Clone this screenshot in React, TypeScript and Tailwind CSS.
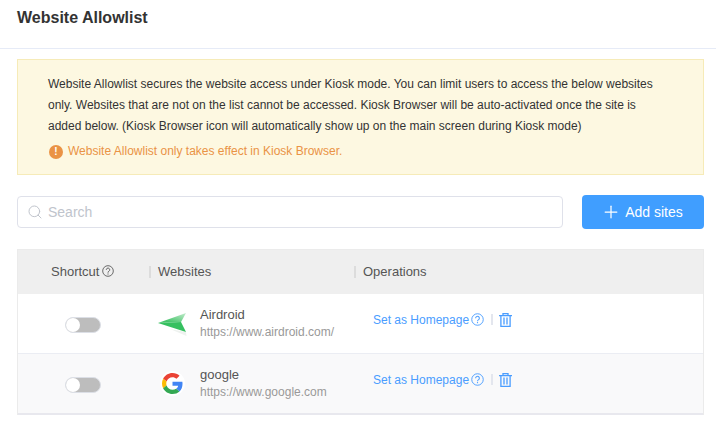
import React from "react";
import { Plus, Search } from "lucide-react";

function HelpIcon({ className }: { className?: string }) {
  return (
    <svg viewBox="0 0 14 14" fill="none" stroke="currentColor" className={className}>
      <circle cx="7" cy="7" r="6.2" strokeWidth="1" />
      <path d="M5 5.6a2 2 0 1 1 3.2 1.6c-.8.5-1.200.8-1.200 1.700" strokeWidth="1.100" />
      <path d="M7 9.800v1.200" strokeWidth="1.200" />
    </svg>
  );
}

function TrashIcon() {
  return (
    <svg viewBox="0 0 13 14" fill="none" stroke="#4a9dff" strokeWidth="1.300" className="w-[13px] h-[14px]">
      <path d="M0 2.600h13M4 2.600V.6h5v2M1.900 2.600v10.800h9.200V2.600M5 4.500v7M8 4.500v7" />
    </svg>
  );
}

function AirdroidLogo() {
  return (
    <svg viewBox="0 0 30 26" className="w-[30px] h-[26px] ml-2">
      <defs>
        <linearGradient id="airdroidTop" x1="0" y1="1" x2="1" y2="0">
          <stop offset="0.25" stopColor="#45c46a" />
          <stop offset="1" stopColor="#c4ecce" />
        </linearGradient>
      </defs>
      <path d="M12 18 L28 21 L28.500 25 Z" fill="#eef2ef" />
      <path d="M0 12 L28 2 L23 11 Z" fill="url(#airdroidTop)" />
      <path d="M0 12 L23 11 L28 21 Z" fill="#36c060" />
    </svg>
  );
}

function GoogleLogo() {
  return (
    <div className="w-[25px] h-[25px] ml-[10px] rounded-full bg-white flex items-center justify-center">
      <svg viewBox="0 0 48 48" className="w-[21px] h-[21px]">
        <path fill="#EA4335" d="M24 9.500c3.500 0 6.700 1.200 9.200 3.600l6.900-6.900C35.900 2.400 30.500 0 24 0 14.600 0 6.500 5.400 2.600 13.200l8 6.200C12.400 13.700 17.700 9.500 24 9.500z" />
        <path fill="#4285F4" d="M46.900 24.500c0-1.600-.2-3.100-.4-4.500H24v9h12.900c-.6 3-2.200 5.500-4.700 7.200l7.700 6c4.500-4.200 7-10.300 7-17.700z" />
        <path fill="#FBBC05" d="M10.500 28.600c-.5-1.400-.8-3-.8-4.600s.3-3.200.8-4.600l-8-6.200C.9 16.500 0 20.100 0 24s.9 7.500 2.600 10.800l7.900-6.200z" />
        <path fill="#34A853" d="M24 48c6.500 0 11.900-2.100 15.900-5.800l-7.700-6c-2.200 1.400-4.900 2.300-8.200 2.300-6.300 0-11.600-4.200-13.500-9.900l-8 6.200C6.500 42.600 14.600 48 24 48z" />
      </svg>
    </div>
  );
}

function Toggle() {
  return (
    <div className="w-9 h-4 rounded-full bg-[#bdbdbd] border border-[#dcdfe6] flex items-center">
      <div className="w-[14px] h-[14px] rounded-full bg-white" />
    </div>
  );
}

function Row({ logo, name, url, last }: { logo: React.ReactNode; name: string; url: string; last?: boolean }) {
  return (
    <div className={last ? "flex h-[61px] items-center border-b-2 border-[#e8e8ee] bg-[#f9f9fa]" : "flex h-[60px] items-center border-b border-[#ebedf3] bg-white"}>
      <div className="w-[132px] pl-[47px] pt-[2px]">
        <Toggle />
      </div>
      <div className="w-[50px]">{logo}</div>
      <div className="w-[173px]">
        <div className="leading-[18px] text-[#555] text-[13px]">{name}</div>
        <div className="text-xs leading-[17px] text-[#999]">{url}</div>
      </div>
      <div className="flex items-center text-xs text-[#4a9dff] -mt-[8px]">
        <span>Set as Homepage</span>
        <HelpIcon className="w-[13px] h-[13px] ml-[2px]" />
        <span className="w-[2px] h-[11px] bg-[#e3e6ee] ml-[7px] mr-[6px]" />
        <TrashIcon />
      </div>
    </div>
  );
}

export default function App() {
  return (
    <div className="w-[716px] h-[426px] bg-white overflow-hidden font-['Liberation_Sans',Arial,sans-serif]">
      {/* Header */}
      <div className="h-[49px] border-b border-[#e6ebf7] pl-[17px] pt-[9px]">
        <h1 className="text-base font-bold leading-[18px] text-[#333]">Website Allowlist</h1>
      </div>

      <div className="pl-[17px] pr-3">
        {/* Notice */}
        <div className="mt-[10px] h-[116px] border border-[#f6ebb8] bg-[#fdf8e1] pl-[30px] pt-[14px]">
          <p className="text-xs leading-[21px] text-[#333]">
            Website Allowlist secures the website access under Kiosk mode. You can limit users to access the below websites
            <br />
            only. Websites that are not on the list cannot be accessed. Kiosk Browser will be auto-activated once the site is
            <br />
            added below. (Kiosk Browser icon will automatically show up on the main screen during Kiosk mode)
          </p>
          <div className="flex items-center gap-[5px] ml-[1px] mt-1 text-xs leading-[21px] text-[#ea9345]">
            <span className="w-[14px] h-[14px] rounded-full bg-[#ea9345] text-white text-[10px] leading-[14px] font-bold text-center">!</span>
            <span>Website Allowlist only takes effect in Kiosk Browser.</span>
          </div>
        </div>

        {/* Search + add */}
        <div className="flex items-center justify-between mt-5">
          <div className="w-[546px] h-8 border border-[#dfe1ea] rounded flex items-center pl-[9px] gap-[5px]">
            <Search className="w-4 h-4 text-[#c0c4cc]" strokeWidth={1.5} />
            <span className="text-sm text-[#c0c4cc]">Search</span>
          </div>
          <button className="w-[122px] h-[34px] rounded bg-[#409eff] text-white text-sm flex items-center justify-center gap-1 pr-[2px]">
            <Plus className="w-5 h-5" strokeWidth={1.5} />
            Add sites
          </button>
        </div>

        {/* Table */}
        <div className="mt-5 border border-[#ebebeb] border-b-0">
          <div className="flex h-[44px] items-center bg-[#efefef] text-[#555] text-[13px]">
            <div className="w-[131px] pl-[33px] flex items-center gap-[3px]">
              <span>Shortcut</span>
              <HelpIcon className="w-3 h-3 -mt-[2px]" />
            </div>
            <span className="w-[2px] h-3 bg-[#dcdcdc]" />
            <div className="w-[203px] pl-[7px]">Websites</div>
            <span className="w-[2px] h-3 bg-[#dcdcdc]" />
            <div className="pl-[7px]">Operations</div>
          </div>
          <Row logo={<AirdroidLogo />} name="Airdroid" url="https://www.airdroid.com/" />
          <Row logo={<GoogleLogo />} name="google" url="https://www.google.com" last />
        </div>
      </div>
    </div>
  );
}
